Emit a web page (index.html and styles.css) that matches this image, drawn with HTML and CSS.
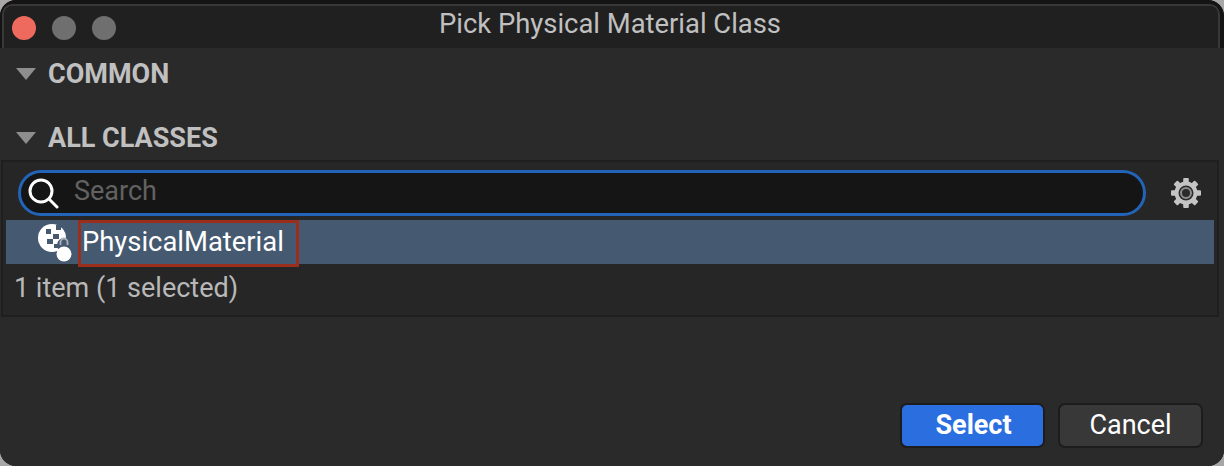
FILE: index.html
```html
<!DOCTYPE html>
<html lang="en">
<head>
<meta charset="utf-8">
<title>Pick Physical Material Class</title>
<link rel="stylesheet" href="styles.css">
</head>
<body>
<div class="window">
  <header class="titlebar">
    <div class="lights">
      <span class="light red"></span>
      <span class="light"></span>
      <span class="light"></span>
    </div>
    <div class="title">Pick Physical Material Class</div>
  </header>
  <main class="content">
    <div class="section-head common"><span class="arrow"></span><span>COMMON</span></div>
    <div class="section-head classes"><span class="arrow"></span><span>ALL CLASSES</span></div>
    <section class="panel">
      <div class="search-row">
        <div class="search">
          <svg class="search-icon" viewBox="0 0 32 32" width="32" height="32"><circle cx="14" cy="14" r="11" fill="none" stroke="#fff" stroke-width="3"/><path d="M22 22l8 8" stroke="#fff" stroke-width="3" stroke-linecap="round"/></svg>
          <span class="placeholder">Search</span>
        </div>
        <svg class="gear" viewBox="0 0 30 30" width="30" height="30">
          <g fill="#c4c4c4">
            <rect x="12.2" y="0" width="5.6" height="30" rx="1"/>
            <rect x="12.2" y="0" width="5.6" height="30" rx="1" transform="rotate(45 15 15)"/>
            <rect x="12.2" y="0" width="5.6" height="30" rx="1" transform="rotate(90 15 15)"/>
            <rect x="12.2" y="0" width="5.6" height="30" rx="1" transform="rotate(135 15 15)"/>
            <circle cx="15" cy="15" r="11.5"/>
          </g>
          <circle cx="15" cy="15" r="7.5" fill="#2a2a2a"/>
          <circle cx="15" cy="15" r="5" fill="none" stroke="#8d8d8d" stroke-width="2"/>
        </svg>
      </div>
      <div class="row">
        <svg class="mat-icon" viewBox="0 0 34 38" width="34" height="38">
          <circle cx="14" cy="14" r="14" fill="#fff"/>
          <g fill="#46596f">
            <rect x="8" y="5" width="5" height="5"/>
            <rect x="18" y="1" width="5" height="5"/>
            <rect x="15" y="10" width="6" height="5"/>
            <rect x="9" y="15" width="6" height="5"/>
            <path d="M16 20h5v4h-5z"/>
            <circle cx="26" cy="21" r="7"/>
          </g>
          <path d="M22.5 21v-3a3.5 3.5 0 0 1 7 0v3" fill="none" stroke="#a8b2bd" stroke-width="1.8"/>
          <circle cx="26" cy="30" r="7.5" fill="#fff"/>
        </svg>
        <span class="row-label">PhysicalMaterial</span>
      </div>
      <div class="status">1 item (1 selected)</div>
    </section>
    <footer class="actions">
      <button class="btn primary">Select</button>
      <button class="btn">Cancel</button>
    </footer>
  </main>
</div>
</body>
</html>
```

FILE: styles.css
```css
* { box-sizing: border-box; }
html, body { margin: 0; padding: 0; background: #a8a6a6; }
body { width: 1224px; height: 466px; overflow: hidden; font-family: Roboto, "Liberation Sans", sans-serif; }
.window { width: 1224px; height: 466px; display: flex; flex-direction: column; background: #2a2a2a; border-radius: 16px; overflow: hidden; }
.titlebar { flex: none; background: #202020; border: solid #383838; border-width: 2px 2px 0 2px; border-radius: 10px 10px 0 0; outline: 4px solid #141414; margin: 4px 4px 0 2px; display: flex; align-items: center; height: 44px; padding-top: 2px; }
.lights { display: flex; gap: 16px; padding-left: 8px; }
.light { width: 24px; height: 24px; border-radius: 50%; background: #6f6f6f; }
.light.red { background: #ee6a5e; }
.title { flex: 1; text-align: center; color: #c0c0c0; font-size: 27.4px; margin: -8px 22px 0 -92px; white-space: nowrap; }
.content { flex: 1; display: flex; flex-direction: column; background: #2a2a2a; }
.section-head { display: flex; align-items: center; gap: 12px; padding-left: 16px; color: #c0c0c0; font-weight: 700; font-size: 27px; height: 32px; }
.common { margin-top: 10px; }
.classes { margin-top: 32px; }
.arrow { width: 0; height: 0; border-left: 10px solid transparent; border-right: 10px solid transparent; border-top: 12px solid #8e8e8e; }
.panel { margin: 6px 0 0 1px; background: #262626; border: 2px solid #1f1f1f; height: 157px; width: 1218px; padding: 0 3px 0 3px; }
.search-row { display: flex; align-items: center; height: 58px; padding: 3px 13px 0 12px; gap: 25px; }
.search { flex: 1; height: 46px; border-radius: 23px; background: #151515; border: 3px solid #2264b8; display: flex; align-items: center; padding-left: 6px; gap: 15px; }
.search-icon { flex: none; }
.placeholder { color: #626262; font-size: 27px; margin-top: -4px; }
.gear { flex: none; }
.row { height: 44px; background: #455a70; display: flex; align-items: center; padding-left: 32px; gap: 6px; }
.mat-icon { flex: none; margin-top: 2px; }
.row-label { color: #fff; font-size: 27.4px; height: 47px; width: 221px; border: 3px solid #9a2f1e; padding: 0 0 4px 1px; display: flex; align-items: center; margin-top: 3px; flex: none; }
.status { color: #b8b8b8; font-size: 27px; padding: 8px 0 0 8px; }
.actions { margin-top: auto; display: flex; justify-content: flex-end; gap: 13px; padding: 0 21px 18px 0; }
.btn { width: 145px; height: 45px; border-radius: 7px; border: 2px solid #1c1c1c; background: #383838; color: #fff; font-family: inherit; font-size: 27px; padding: 0 0 2px; }
.btn.primary { background: #2a6ee0; font-weight: 700; padding-left: 2px; }
```
